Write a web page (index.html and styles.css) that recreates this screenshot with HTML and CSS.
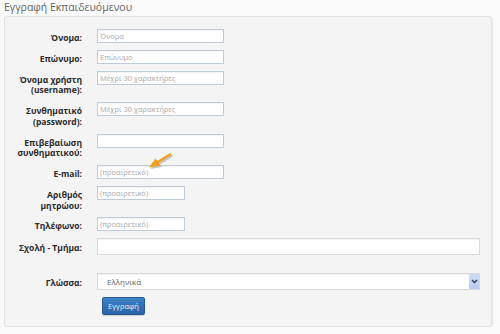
FILE: index.html
```html
<!DOCTYPE html>
<html lang="el">
<head>
    <meta charset="UTF-8">
    <title>Εγγραφή Εκπαιδευόμενου</title>
    <link rel="stylesheet" href="styles.css">
</head>
<body>
    <h1 class="page-title">Εγγραφή Εκπαιδευόμενου</h1>
    <form class="panel">
        <div class="row">
            <label>Όνομα:</label>
            <input type="text" class="field" placeholder="Όνομα">
        </div>
        <div class="row">
            <label>Επώνυμο:</label>
            <input type="text" class="field" placeholder="Επώνυμο">
        </div>
        <div class="row">
            <label>Όνομα χρήστη<br>(username):</label>
            <input type="text" class="field" placeholder="Μέχρι 30 χαρακτήρες">
        </div>
        <div class="row">
            <label>Συνθηματικό<br>(password):</label>
            <input type="password" class="field" placeholder="Μέχρι 30 χαρακτήρες">
        </div>
        <div class="row">
            <label>Επιβεβαίωση<br>συνθηματικού:</label>
            <input type="password" class="field">
        </div>
        <div class="row email-row">
            <label>E-mail:</label>
            <input type="text" class="field" placeholder="(προαιρετικό)">
            <!-- pointer arrow drawn over the form -->
            <svg class="hint-arrow" width="28" height="20" viewBox="0 0 28 20">
                <g transform="translate(1.5 1.5)">
                    <path d="M23 1.5 L10 9.5" stroke="#c4c4c4" stroke-width="2.6" stroke-linecap="round" fill="none"/>
                    <path d="M2 14.5 L8.5 5.5 L13.5 12.5 Z" fill="#c4c4c4"/>
                </g>
                <path d="M23 1.5 L10 9.5" stroke="#f5a01c" stroke-width="2.6" stroke-linecap="round" fill="none"/>
                <path d="M2 14.5 L8.5 5.5 L13.5 12.5 Z" fill="#f5a01c"/>
            </svg>
        </div>
        <div class="row">
            <label>Αριθμός<br>μητρώου:</label>
            <input type="text" class="field short" placeholder="(προαιρετικό)">
        </div>
        <div class="row">
            <label>Τηλέφωνο:</label>
            <input type="text" class="field short" placeholder="(προαιρετικό)">
        </div>
        <div class="row wide school-row">
            <label>Σχολή - Τμήμα:</label>
            <input type="text" class="field long">
        </div>
        <div class="row wide lang-row">
            <label>Γλώσσα:</label>
            <div class="select-box">
                <select class="field long">
                    <option>Ελληνικά</option>
                    <option>English</option>
                </select>
                <span class="select-arrow">
                    <svg width="7" height="5" viewBox="0 0 7 5"><path d="M1 1 L3.5 3.5 L6 1" stroke="#2d3b55" stroke-width="1.4" fill="none"/></svg>
                </span>
            </div>
        </div>
        <div class="row last-row">
            <span></span>
            <button type="button" class="btn">Εγγραφή</button>
        </div>
    </form>
</body>
</html>
```

FILE: styles.css
```css
body {
    font-family: "Open Sans", Arial, sans-serif;
    background-color: #fafafa;
    margin: 0;
    padding: 0;
}
.page-title {
    font-size: 10.5px;
    font-weight: normal;
    color: #666;
    line-height: 14px;
    margin: 0 0 2px 4px;
}
.panel {
    margin-left: 4px;
    width: 488px;
    box-sizing: border-box;
    background-color: #f4f4f4;
    border: 1px solid #e2e2e2;
    border-radius: 3px;
    box-shadow: 1px 1px 2px rgba(0, 0, 0, 0.08);
    padding: 12px 11px 11px 0;
}
.row {
    display: grid;
    grid-template-columns: 77px 1fr;
    column-gap: 15px;
    align-items: start;
    margin-bottom: 6px;
}
.row label {
    text-align: right;
    font-weight: bold;
    font-size: 8.5px;
    line-height: 10.75px;
    padding-top: 4px;
    color: #2b2b2b;
}
.row.wide label {
    padding-top: 5px;
}
.school-row {
    margin-bottom: 18px;
}
.lang-row {
    margin-bottom: 7px;
}
.last-row {
    margin-bottom: 0;
    justify-items: start;
}
.email-row {
    position: relative;
}
.hint-arrow {
    position: absolute;
    left: 142px;
    top: -12px;
}
.field {
    display: block;
    box-sizing: border-box;
    width: 127px;
    height: 14px;
    margin: 0;
    padding: 0 2px;
    font-family: "Open Sans", Arial, sans-serif;
    font-size: 7.5px;
    color: #555;
    background: #fff;
    border: 1px solid #bfcbd8;
    border-radius: 0;
    box-shadow: inset 0 1px 1px rgba(0, 0, 0, 0.05);
    outline: none;
}
.field::placeholder {
    color: #a9a9a9;
}
.field.short {
    width: 88px;
}
.field.long {
    width: 383px;
    height: 17px;
    border-color: #d9d9d9;
}
.select-box {
    position: relative;
    width: 383px;
}
select.field {
    appearance: none;
    -webkit-appearance: none;
    padding-left: 9px;
    font-size: 8px;
    color: #666;
    border-color: #e3e3e3;
}
.select-arrow {
    position: absolute;
    right: 1px;
    top: 1px;
    width: 10px;
    height: 15px;
    background: linear-gradient(#cfdcf6, #b9cbf0);
    display: flex;
    align-items: center;
    justify-content: center;
}
.btn {
    display: block;
    margin-left: 5px;
    width: 43px;
    height: 18px;
    padding: 0;
    font-family: "Open Sans", Arial, sans-serif;
    font-size: 7.5px;
    color: #e9f1fa;
    background: linear-gradient(#3c82c8, #2863a8);
    border: 1px solid #265a96;
    border-radius: 2px;
    box-shadow: 0 1px 1px rgba(0, 0, 0, 0.15);
    cursor: pointer;
}
```
